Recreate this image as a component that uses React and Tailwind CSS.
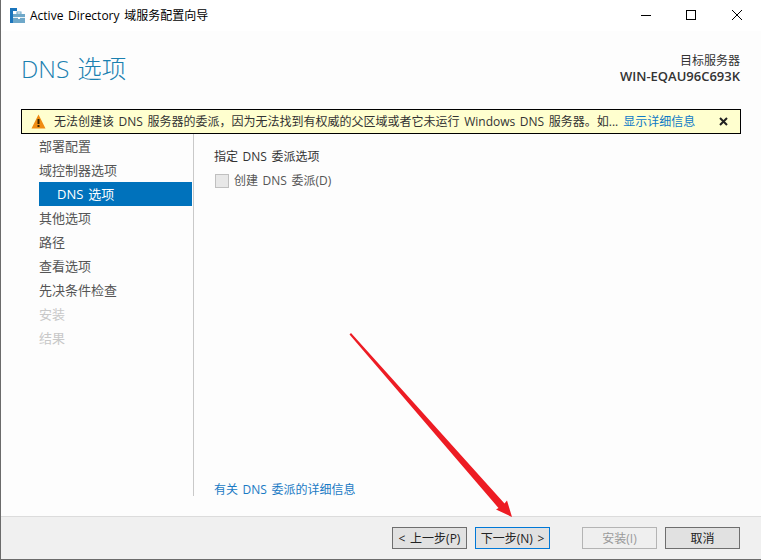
function WizardIcon() {
  return (
    <svg width="15" height="15" viewBox="0 0 15 15" className="shrink-0">
      <rect x="0" y="0" width="7" height="3" fill="#1b75bc" />
      <rect x="0" y="3" width="3" height="12" fill="#1b75bc" />
      <rect x="3" y="6" width="12" height="9" fill="#6fa8c9" />
      <rect x="3" y="9" width="12" height="1" fill="#e8f1f6" />
      <rect x="7" y="4" width="4" height="2" fill="none" stroke="#6fa8c9" strokeWidth="1" />
      <rect x="8" y="9" width="2" height="2" fill="#fff" />
    </svg>
  );
}

function WindowButtons() {
  return (
    <div className="flex items-center gap-[35px] pr-[19px] pb-[1px]">
      <svg width="10" height="10" viewBox="0 0 10 10"><path d="M0 5.5h10" stroke="#000" strokeWidth="1" /></svg>
      <svg width="10" height="10" viewBox="0 0 10 10"><rect x="0.5" y="0.5" width="9" height="9" fill="none" stroke="#000" /></svg>
      <svg width="10" height="10" viewBox="0 0 10 10" className="ml-[1px]"><path d="M0 0l10 10M10 0L0 10" stroke="#000" strokeWidth="1" /></svg>
    </div>
  );
}

function WarningIcon() {
  return (
    <svg width="15" height="15" viewBox="0 0 15 15" className="shrink-0">
      <path d="M7.5 0.5L14.5 14.5H0.5Z" fill="#f08c12" />
      <rect x="6.5" y="5" width="2" height="5" fill="#3a2400" />
      <rect x="6.5" y="11" width="2" height="2" fill="#3a2400" />
    </svg>
  );
}

const steps = [
  { label: '部署配置' },
  { label: '域控制器选项' },
  { label: 'DNS 选项', active: true },
  { label: '其他选项' },
  { label: '路径' },
  { label: '查看选项' },
  { label: '先决条件检查' },
  { label: '安装', disabled: true },
  { label: '结果', disabled: true },
];

function Step({ label, active, disabled }) {
  if (active) {
    return <div className="h-6 leading-6 pl-[18px] bg-[#0072bc] text-white">{label}</div>;
  }
  return <div className={`h-6 leading-6 ${disabled ? 'text-[#c8c8c8]' : 'text-[#555555]'}`}>{label}</div>;
}

function WizButton({ children, variant }) {
  const base = 'w-[75px] h-[22px] flex items-center justify-center border text-[12px] leading-none whitespace-nowrap pt-[1px]';
  if (variant === 'focus') return <div className={`${base} bg-[#e1e1e1] border-[#0078d7] text-[#222222]`}>{children}</div>;
  if (variant === 'disabled') return <div className={`${base} bg-[#efefef] border-[#b4b4b4] text-[#9a9a9a]`}>{children}</div>;
  return <div className={`${base} bg-[#e1e1e1] border-[#6e6e6e] text-[#222222]`}>{children}</div>;
}

export default function App() {
  return (
    <div
      className="relative w-[761px] h-[560px] overflow-hidden bg-[#fdfdfd] border-l border-b border-[#6b6b6b] flex flex-col text-[12px] text-[#222222] [word-spacing:1.5px]"
      style={{ fontFamily: '"Open Sans", "Noto Sans CJK SC", sans-serif' }}
    >
      {/* title bar */}
      <div className="h-[31px] shrink-0 bg-white flex items-center justify-between pl-[9px]">
        <div className="flex items-center gap-[5px] text-[12px] text-black">
          <WizardIcon />
          <span>Active Directory 域服务配置向导</span>
        </div>
        <WindowButtons />
      </div>

      {/* header */}
      <div className="h-[78px] shrink-0 flex justify-between pl-[20px] pr-[21px]">
        <div className="pt-[19px] text-[24.5px] leading-[38px] text-[#1a80b0] font-light">DNS 选项</div>
        <div className="pt-[22px] text-right text-[12px] leading-[16px] text-[#333333]">
          <div>目标服务器</div>
          <div className="font-semibold text-[13px] leading-[15px]">WIN-EQAU96C693K</div>
        </div>
      </div>

      {/* warning bar */}
      <div className="ml-[20px] w-[720px] h-[25px] shrink-0 border border-black bg-[#ffffcf] flex items-center pl-[9px] pr-[12px] text-[12px]">
        <WarningIcon />
        <span className="ml-[8px] whitespace-nowrap text-[#333333]">无法创建该 DNS 服务器的委派，因为无法找到有权威的父区域或者它未运行 Windows DNS 服务器。如...</span>
        <span className="ml-[5px] whitespace-nowrap text-[#0f7ac6]">显示详细信息</span>
        <svg width="9" height="9" viewBox="0 0 9 9" className="ml-auto shrink-0">
          <path d="M1 1l7 7M8 1L1 8" stroke="#222" strokeWidth="2" />
        </svg>
      </div>

      {/* body */}
      <div className="h-[362px] shrink-0 flex">
        <div className="w-[155px] ml-[38px] shrink-0 border-r border-[#c9c9c9] text-[13px] pr-[1px]">
          {steps.map((s) => (
            <Step key={s.label} {...s} />
          ))}
        </div>
        <div className="flex-1 pl-[20px] flex flex-col">
          <div className="mt-[13px] h-5 leading-5 text-[#333333]">指定 DNS 委派选项</div>
          <div className="mt-[4px] flex items-center h-5 text-[#555555]">
            <div className="w-[14px] h-[14px] ml-[1px] border border-[#c0c0c0] bg-[#e8e8e8]" />
            <span className="ml-[5px]">创建 DNS 委派(D)</span>
          </div>
          <div className="mt-auto h-5 leading-5 mb-[-4px] text-[#1a7ac4]">有关 DNS 委派的详细信息</div>
        </div>
      </div>

      {/* footer */}
      <div className="mt-[20px] flex-1 border-t border-[#dcdcdc] bg-[#f0f0f0] flex items-start pt-[10px] pl-[391px]">
        <WizButton>&lt; 上一步(P)</WizButton>
        <div className="ml-[8px]"><WizButton variant="focus">下一步(N) &gt;</WizButton></div>
        <div className="ml-[32px]"><WizButton variant="disabled">安装(I)</WizButton></div>
        <div className="ml-[8px]"><WizButton>取消</WizButton></div>
      </div>

      {/* red annotation arrow */}
      <svg width="761" height="560" viewBox="0 0 761 560" className="absolute left-[-1px] top-0 pointer-events-none">
        <path d="M349.5 334.5L351 333L504.5 503.5L507 500.5L512 517L496 509.5L498.5 508Z" fill="#ed1c24" />
      </svg>
    </div>
  );
}
